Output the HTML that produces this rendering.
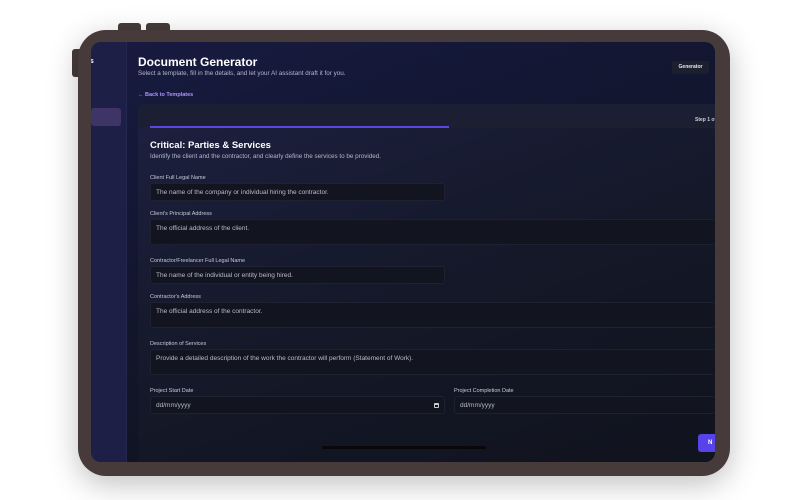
<!DOCTYPE html><html><head><style>
*{margin:0;padding:0;box-sizing:border-box}
body{width:800px;height:500px;background:#fff;position:relative;overflow:hidden;font-family:"Liberation Sans",sans-serif}
.a{position:absolute;white-space:nowrap}
.lbl{position:absolute;left:150px;font-size:5.5px;color:#c8cbd8;white-space:nowrap}
.in{position:absolute;left:150px;background:#12141f;border:1px solid #1e2130;border-radius:3px;font-size:6.5px;color:#b8bccb;padding:5px 5px;white-space:nowrap}
</style></head><body>
<div class="a" style="left:118px;top:23px;width:23px;height:10px;background:#463b3a;border-radius:3px"></div>
<div class="a" style="left:146px;top:23px;width:24px;height:10px;background:#463b3a;border-radius:3px"></div>
<div class="a" style="left:72px;top:49px;width:10px;height:28px;background:#463b3a;border-radius:3px"></div>
<div class="a" style="left:78px;top:30px;width:652px;height:446px;background:#463b3a;border-radius:28px;box-shadow:0 8px 30px rgba(0,0,0,.25)"></div>
<div class="a" style="left:91px;top:42px;width:624px;height:420px;border-radius:10px;overflow:hidden;background:linear-gradient(160deg,#181b40 0%,#131734 30%,#111526 60%,#0d1018 100%)">
 <div class="a" style="left:0;top:0;width:36px;height:420px;background:#1d1f47;border-right:1px solid #242752"></div>
 <div class="a" style="top:16px;font-size:7px;font-weight:bold;color:#fff;left:-5px">as</div>
 <div class="a" style="left:0;top:66px;width:30px;height:18px;background:#3e3566;border-radius:3px"></div>
 <div class="a" style="left:47px;top:13px;font-size:12px;font-weight:bold;color:#fff">Document Generator</div>
 <div class="a" style="left:47px;top:28px;font-size:6.3px;color:#b4b7c8">Select a template, fill in the details, and let your AI assistant draft it for you.</div>
 <div class="a" style="left:581px;top:19px;width:37px;height:13px;background:#1b1f2e;border-radius:2px;font-size:5px;color:#e8e8f0;font-weight:bold;text-align:center;line-height:13px">Generator</div>
 <div class="a" style="left:47px;top:50px;font-size:5.5px;color:#a995ff;font-weight:bold">← Back to Templates</div>
 <div class="a" style="left:47px;top:62px;width:600px;height:380px;background:linear-gradient(160deg,#1d2040,#141828 50%,#10131c);border-radius:6px"></div>
 <div class="a" style="left:47px;top:62px;width:600px;height:23px;background:#1b1f33;border-radius:6px 6px 0 0"></div>
 <div class="a" style="left:604px;top:75px;font-size:5px;color:#ccc;font-weight:bold">Step 1 of</div>
 <div class="a" style="left:59px;top:84px;width:570px;height:2px;background:#1c1f2e"></div>
 <div class="a" style="left:59px;top:84px;width:299px;height:2px;background:#5b46e6"></div>
 <div class="a" style="left:59px;top:98px;font-size:9.5px;font-weight:bold;color:#fff">Critical: Parties &amp; Services</div>
 <div class="a" style="left:59px;top:111px;font-size:6.3px;color:#b4b7c8">Identify the client and the contractor, and clearly define the services to be provided.</div>
 <div class="a" style="left:231px;top:404px;width:164px;height:3px;background:#0a0708;border-radius:2px"></div>
 <div class="a" style="left:607px;top:392px;width:20px;height:18px;background:#5843ea;border-radius:3px;color:#fff;font-size:6px;font-weight:bold;line-height:18px;padding-left:10px">N</div>
</div>
<div class="lbl" style="top:175px">Client Full Legal Name</div>
<div class="in" style="top:183px;width:295px;height:18px">The name of the company or individual hiring the contractor.</div>
<div class="lbl" style="top:211px">Client's Principal Address</div>
<div class="in" style="top:219px;width:565px;height:26px;border-right:none">The official address of the client.</div>
<div class="lbl" style="top:258px">Contractor/Freelancer Full Legal Name</div>
<div class="in" style="top:266px;width:295px;height:18px">The name of the individual or entity being hired.</div>
<div class="lbl" style="top:294px">Contractor's Address</div>
<div class="in" style="top:302px;width:565px;height:26px;border-right:none">The official address of the contractor.</div>
<div class="lbl" style="top:341px">Description of Services</div>
<div class="in" style="top:349px;width:565px;height:26px;border-right:none">Provide a detailed description of the work the contractor will perform (Statement of Work).</div>
<div class="lbl" style="top:388px">Project Start Date</div>
<div class="in" style="top:396px;width:295px;height:18px">dd/mm/yyyy<span style="position:absolute;right:5px;top:6px;width:5px;height:5px;border:1px solid #ccc;border-top-width:2px;border-radius:1px"></span></div>
<div class="lbl" style="top:388px;left:454px">Project Completion Date</div>
<div class="in" style="top:396px;left:454px;width:261px;height:18px;border-right:none">dd/mm/yyyy</div>
</body></html>
